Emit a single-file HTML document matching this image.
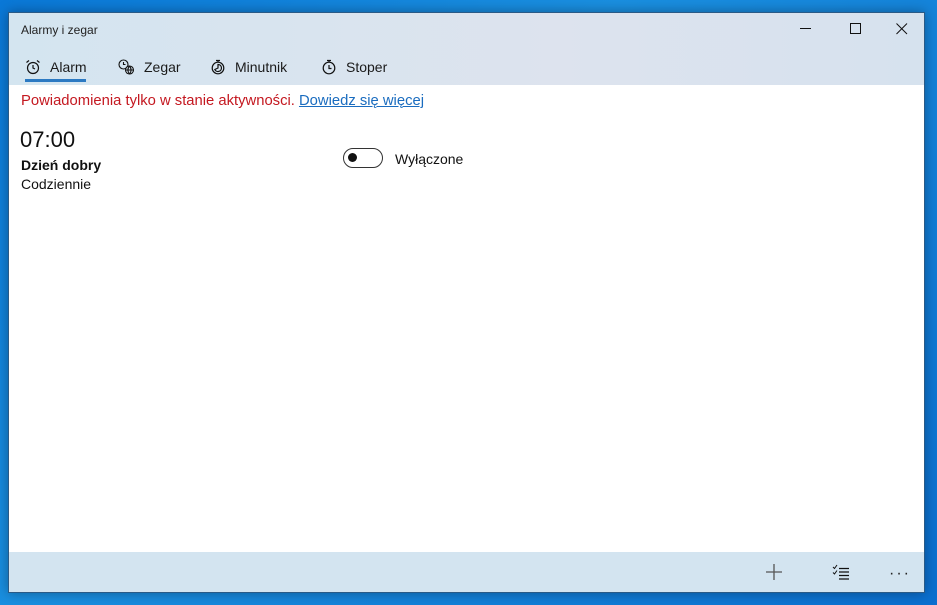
<!DOCTYPE html>
<html><head><meta charset="utf-8"><style>
*{margin:0;padding:0;box-sizing:border-box}
body{width:937px;height:605px;overflow:hidden;background:linear-gradient(135deg,#0a78d7 0%,#1a8fe0 40%,#0b6fcf 100%);font-family:"Segoe UI","Liberation Sans",sans-serif;position:relative}
.win{position:absolute;left:8px;top:12px;width:917px;height:581px;border:1px solid #2a5a86;background:#fff;box-shadow:0 0 12px rgba(0,0,0,.35)}
.top{position:absolute;left:0;top:0;width:100%;height:72px;background:linear-gradient(90deg,#d4e5f0,#dde3ee 60%,#d6e2ee)}
.title{position:absolute;left:12px;top:10px;font-size:12px;color:#222}
.tabs{position:absolute;top:46px;left:0;font-size:14px;color:#1a1a1a}
.tab{position:absolute;white-space:nowrap;display:flex;align-items:center}
.tab svg{margin-right:9px}
.ul{position:absolute;left:16px;top:66px;width:61px;height:3px;background:#2b79c2}
.ctl{position:absolute;top:8px}
.msg{position:absolute;left:12px;top:80px;font-size:14.8px;color:#c41820}
.msg a{color:#1a6cbf;text-decoration:underline}
.time{position:absolute;left:11px;top:114px;font-size:22px;font-weight:300;color:#111}
.name{position:absolute;left:12px;top:144px;font-size:14px;font-weight:bold;color:#111}
.rep{position:absolute;left:12px;top:163px;font-size:14px;color:#111}
.tog{position:absolute;left:334px;top:135px;width:40px;height:20px;border:1.5px solid #333;border-radius:10px}
.tog:after{content:"";position:absolute;left:4px;top:4px;width:9px;height:9px;border-radius:50%;background:#111}
.off{position:absolute;left:386px;top:138px;font-size:14px;color:#111}
.bot{position:absolute;left:0;bottom:0;width:100%;height:40px;background:#d3e4f0}
</style></head><body>
<div class="win">
<div class="top">
<div class="title">Alarmy i zegar</div>
<svg class="ctl" style="left:790px" width="14" height="14"><line x1="1" y1="7.5" x2="12" y2="7.5" stroke="#111"/></svg>
<svg class="ctl" style="left:840px" width="14" height="14"><rect x="1.5" y="2.5" width="10" height="10" fill="none" stroke="#111"/></svg>
<svg class="ctl" style="left:886px" width="14" height="14"><path d="M1.5 2.5L12 13M12 2.5L1.5 13" stroke="#111"/></svg>
<div class="tabs">
<div class="tab" style="left:16px"><svg width="16" height="16" viewBox="0 0 16 16" fill="none" stroke="#111" stroke-width="1.2"><circle cx="8" cy="9" r="5.5"/><path d="M8 6v3l2 1M1.5 3.5l2.5-2M14.5 3.5l-2.5-2"/></svg>Alarm</div>
<div class="tab" style="left:109px"><svg width="17" height="16" viewBox="0 0 17 16" fill="none" stroke="#111" stroke-width="1.1"><circle cx="5.5" cy="5.5" r="4.5"/><path d="M5.5 3v2.5h2"/><circle cx="11.5" cy="11" r="4" fill="#d8e4ef"/><path d="M7.5 11h8M11.5 7c-2 2.5-2 5.5 0 8M11.5 7c2 2.5 2 5.5 0 8"/></svg>Zegar</div>
<div class="tab" style="left:201px"><svg width="16" height="16" viewBox="0 0 16 16" fill="none" stroke="#111" stroke-width="1.2"><circle cx="8" cy="9" r="5.8"/><path d="M6 1.5h4M8 1.5v2M8 9V5.5A3.5 3.5 0 1 1 4.8 10.5z"/></svg>Minutnik</div>
<div class="tab" style="left:312px"><svg width="16" height="16" viewBox="0 0 16 16" fill="none" stroke="#111" stroke-width="1.2"><circle cx="8" cy="9" r="5.8"/><path d="M6 1.5h4M8 1.5v2M8 6v3.5h2.5"/></svg>Stoper</div>
</div>
<div class="ul"></div>
</div>
<div class="msg">Powiadomienia tylko w stanie aktywności. <a>Dowiedz się więcej</a></div>
<div class="time">07:00</div>
<div class="name">Dzień dobry</div>
<div class="rep">Codziennie</div>
<div class="tog"></div>
<div class="off">Wyłączone</div>
<div class="bot">
<svg style="position:absolute;left:756px;top:11px" width="18" height="18"><path d="M9 1v16M1 9h16" stroke="#555" stroke-width="1.3"/></svg>
<svg style="position:absolute;left:823px;top:12px" width="18" height="16" fill="none" stroke="#111"><path d="M1 3l1.5 1.5L5 1M1 8.5l1.5 1.5L5 6.5" stroke-width="1"/><path d="M7 4.5h10M7 8h10M7 11.5h10M7 15h10" stroke-width="1.2"/></svg>
<div style="position:absolute;left:880px;top:13px;font-size:16px;letter-spacing:2px;color:#222">···</div>
</div>
</div>
</body></html>
